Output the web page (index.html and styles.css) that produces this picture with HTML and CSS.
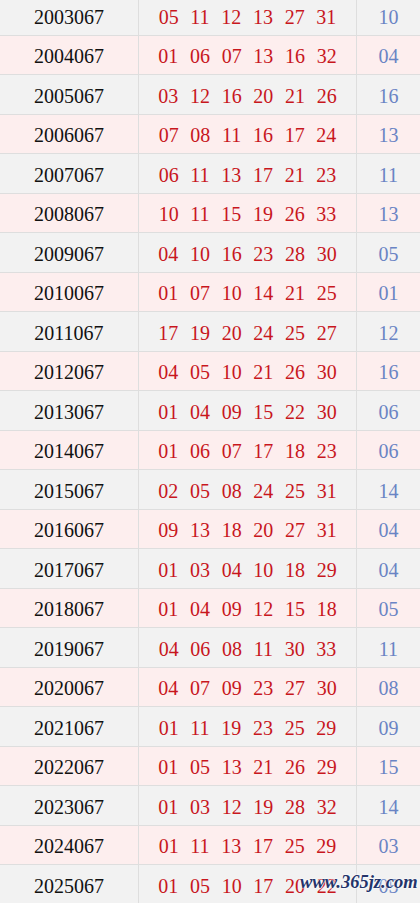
FILE: index.html
```html
<!DOCTYPE html>
<html lang="zh">
<head>
<meta charset="utf-8">
<title>开奖号码</title>
<link rel="stylesheet" href="styles.css">
</head>
<body>
<div class="table" id="t"></div>
<div class="watermark">www.365jz.com</div>
<script>
var data = [
["2003067","05 11 12 13 27 31","10"],
["2004067","01 06 07 13 16 32","04"],
["2005067","03 12 16 20 21 26","16"],
["2006067","07 08 11 16 17 24","13"],
["2007067","06 11 13 17 21 23","11"],
["2008067","10 11 15 19 26 33","13"],
["2009067","04 10 16 23 28 30","05"],
["2010067","01 07 10 14 21 25","01"],
["2011067","17 19 20 24 25 27","12"],
["2012067","04 05 10 21 26 30","16"],
["2013067","01 04 09 15 22 30","06"],
["2014067","01 06 07 17 18 23","06"],
["2015067","02 05 08 24 25 31","14"],
["2016067","09 13 18 20 27 31","04"],
["2017067","01 03 04 10 18 29","04"],
["2018067","01 04 09 12 15 18","05"],
["2019067","04 06 08 11 30 33","11"],
["2020067","04 07 09 23 27 30","08"],
["2021067","01 11 19 23 25 29","09"],
["2022067","01 05 13 21 26 29","15"],
["2023067","01 03 12 19 28 32","14"],
["2024067","01 11 13 17 25 29","03"],
["2025067","01 05 10 17 20 22","05"]
];
var html = "";
data.forEach(function(r, i){
  html += '<div class="row ' + (i % 2 ? 'pink' : 'grey') + '">' +
    '<div class="cell issue">' + r[0] + '</div>' +
    '<div class="cell reds">' + r[1].split(" ").map(function(n){return '<span>' + n + '</span>';}).join("") + '</div>' +
    '<div class="cell blue">' + r[2] + '</div></div>';
});
document.getElementById("t").innerHTML = html;
</script>
</body>
</html>
```
FILE: styles.css
```css
html, body {
  margin: 0;
  padding: 0;
  background: #f2f2f2;
  overflow: hidden;
}
body {
  font-family: "Liberation Serif", "Noto Sans CJK SC", serif;
  font-size: 20px;
  width: 420px;
  height: 903px;
  position: relative;
}
.table {
  margin-top: -4px;
}
.row {
  display: grid;
  grid-template-columns: 139px 218px 63px;
  height: 38.5px;
  border-bottom: 1px solid #dedede;
}
.row.grey { background: #f2f2f2; }
.row.pink { background: #fdeeee; }
.cell {
  display: flex;
  align-items: center;
  justify-content: center;
  padding-top: 4px;
  box-sizing: border-box;
}
.issue {
  color: #111;
  border-right: 1px solid #dedede;
}
.reds {
  color: #c8161d;
  gap: 11.7px;
  border-right: 1px solid #dedede;
}
.blue {
  color: #6a84c4;
}
.watermark {
  position: absolute;
  left: 300px;
  top: 872px;
  font-family: "Liberation Serif", serif;
  font-size: 18.5px;
  font-weight: bold;
  font-style: italic;
  color: #24346a;
  text-shadow: 0 0 2px #fff, 0 0 2px #fff, 0 0 1px #fff;
}
```
